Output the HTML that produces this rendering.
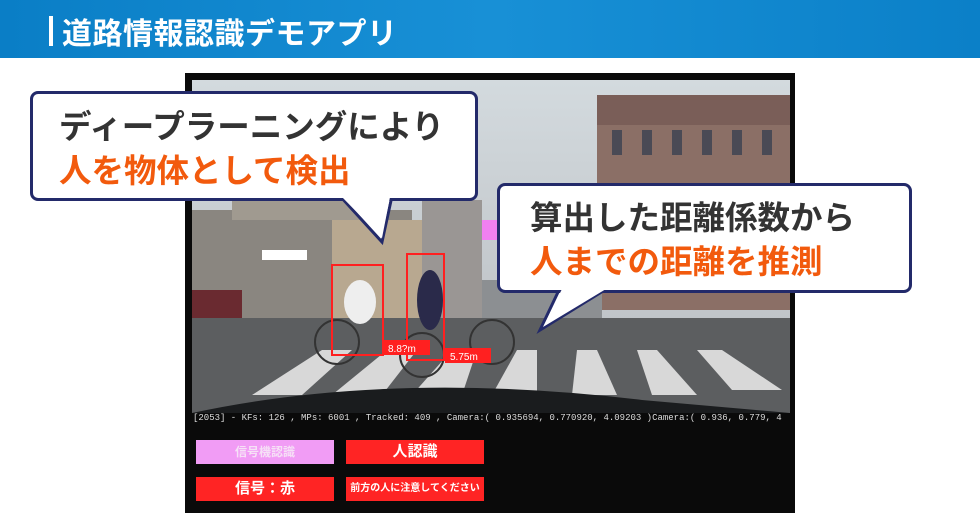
<!DOCTYPE html>
<html><head><meta charset="utf-8"><style>
*{margin:0;padding:0;box-sizing:border-box}
body{width:980px;height:526px;overflow:hidden;background:#fff;position:relative;font-family:"Liberation Sans","Noto Sans CJK JP",sans-serif}
.hdr{position:absolute;left:0;top:0;width:980px;height:58px;background:linear-gradient(90deg,#0a7ec6,#1890d6 50%,#0b80c8)}
.hdr span{position:absolute;left:48px;top:9px;color:#fff;font-size:30px;font-weight:bold;letter-spacing:0.5px}
.hdr i{position:absolute;left:49px;top:16px;width:4px;height:30px;background:#fff}
.frame{position:absolute;left:185px;top:73px;width:610px;height:440px;background:#0a0a0a}
.bub{position:absolute;background:#fff;border:3px solid #232a6a;border-radius:8px;font-weight:bold;line-height:44px}
.l1{color:#333;font-size:32.5px}
.l2{color:#f25a0d;font-size:32.5px}
.btn{position:absolute;height:24px;color:#fff;font-weight:bold;text-align:center;line-height:24px}
</style></head><body>
<div class="hdr"><i></i><span style="left:62px">道路情報認識デモアプリ</span></div>
<div class="frame"></div>
<svg style="position:absolute;left:192px;top:80px" width="598" height="333" viewBox="0 0 598 333">
<defs><linearGradient id="sky" x1="0" y1="0" x2="0" y2="1"><stop offset="0" stop-color="#d3dade"/><stop offset="1" stop-color="#b9bcc0"/></linearGradient></defs>
<rect width="598" height="333" fill="url(#sky)"/>
<rect x="405" y="15" width="193" height="215" fill="#8b6f66"/>
<rect x="405" y="15" width="193" height="30" fill="#7a5e58"/>
<g fill="#4a4a55"><rect x="420" y="50" width="10" height="25"/><rect x="450" y="50" width="10" height="25"/><rect x="480" y="50" width="10" height="25"/><rect x="510" y="50" width="10" height="25"/><rect x="540" y="50" width="10" height="25"/><rect x="570" y="50" width="10" height="25"/></g>
<rect x="0" y="130" width="220" height="110" fill="#8a8680"/>
<rect x="40" y="100" width="140" height="40" fill="#a09a90"/>
<rect x="140" y="140" width="90" height="100" fill="#b8a890"/>
<rect x="70" y="170" width="45" height="10" fill="#fff"/>
<rect x="230" y="120" width="60" height="120" fill="#9a9694"/>
<rect x="290" y="200" width="120" height="40" fill="#8c8f92"/>
<rect x="0" y="210" width="50" height="30" fill="#6a2a30"/>
<rect x="0" y="238" width="598" height="95" fill="#5c5e60"/>
<g fill="#d8d8d8">
<polygon points="60,315 110,315 160,270 130,270"/>
<polygon points="140,315 190,315 225,270 195,270"/>
<polygon points="220,315 270,315 285,270 260,270"/>
<polygon points="300,315 345,315 345,270 325,270"/>
<polygon points="380,315 425,315 405,270 385,270"/>
<polygon points="460,315 505,315 465,270 445,270"/>
<polygon points="540,310 590,310 530,270 505,270"/>
</g>
<path d="M0 333 Q200 290 450 320 L598 333Z" fill="#1a1c1e"/>
<circle cx="145" cy="262" r="22" fill="none" stroke="#333" stroke-width="2"/>
<circle cx="230" cy="275" r="22" fill="none" stroke="#333" stroke-width="2"/>
<circle cx="300" cy="262" r="22" fill="none" stroke="#333" stroke-width="2"/>
<ellipse cx="168" cy="222" rx="16" ry="22" fill="#eee"/>
<ellipse cx="238" cy="220" rx="13" ry="30" fill="#2a2a4a"/>
<g fill="none" stroke="#ff2020" stroke-width="2">
<rect x="140" y="185" width="51" height="90"/>
<rect x="215" y="174" width="37" height="106"/>
</g>
<rect x="190" y="260" width="48" height="15" fill="#ff2020"/>
<rect x="253" y="268" width="46" height="15" fill="#ff2020"/>
<text x="196" y="272" fill="#fff" font-size="10">8.8?m</text>
<text x="258" y="280" fill="#fff" font-size="10">5.75m</text>
<rect x="290" y="140" width="25" height="20" fill="#f080f0"/>
</svg>
<div style="position:absolute;left:193px;top:413px;width:600px;color:#ddd;font-size:9px;font-family:'Liberation Mono',monospace;white-space:nowrap;overflow:hidden">[2053]  - KFs: 126 , MPs: 6001 , Tracked: 409 , Camera:( 0.935694, 0.770920, 4.09203 )Camera:( 0.936, 0.779, 4</div>
<div class="btn" style="left:196px;top:440px;width:138px;background:#f19cf5;color:#f6e0f6;font-size:12px">信号機認識</div>
<div class="btn" style="left:346px;top:440px;width:138px;background:#ff2424;font-size:15px">人認識</div>
<div class="btn" style="left:196px;top:477px;width:138px;background:#ff2424;font-size:15px">信号：赤</div>
<div class="btn" style="left:346px;top:477px;width:138px;background:#ff2424;font-size:10px">前方の人に注意してください</div>
<svg style="position:absolute;left:0;top:0" width="980" height="526">
<polygon points="340,196 392,196 382,242" fill="#fff" stroke="#232a6a" stroke-width="3"/>
<polygon points="560,288 608,288 540,330" fill="#fff" stroke="#232a6a" stroke-width="3"/>
</svg>
<div class="bub" style="left:30px;top:91px;width:448px;height:110px;padding:11px 0 0 26px"><div class="l1">ディープラーニングにより</div><div class="l2">人を物体として検出</div></div>
<div class="bub" style="left:497px;top:183px;width:415px;height:110px;padding:10px 0 0 30px"><div class="l1">算出した距離係数から</div><div class="l2">人までの距離を推測</div></div>
<svg style="position:absolute;left:0;top:0" width="980" height="526">
<polygon points="342,197 390,197 382,238" fill="#fff"/>
<polygon points="562,289 606,289 543,327" fill="#fff"/>
</svg>
</body></html>
